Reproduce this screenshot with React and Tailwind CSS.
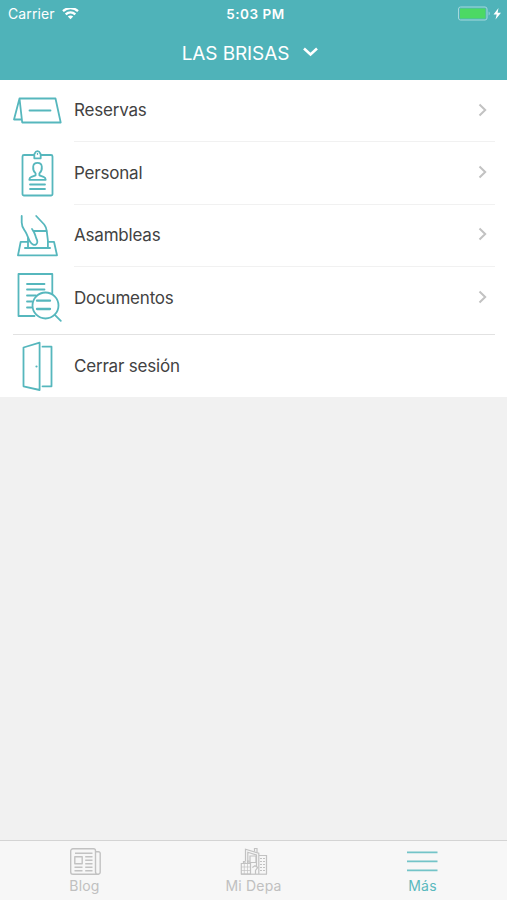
import React from "react";

const iconProps = {
  width: 50,
  height: 62,
  fill: "none",
  stroke: "#56b7bd",
  strokeWidth: 1.8,
  strokeLinejoin: "round",
  strokeLinecap: "round",
  className: "shrink-0",
};

const ReservasIcon = () => (
  <svg {...iconProps} viewBox="12 80 50 62">
    <path d="M19.5 98.5H55.5L60.7 122.5H22.2L19.5 98.5L14 119.5H21.5" />
    <path d="M29.5 110.5H50.5" />
  </svg>
);

const PersonalIcon = () => (
  <svg {...iconProps} viewBox="12 142 50 62">
    <path d="M34 155H24a1.5 1.5 0 0 0-1.5 1.5V194a1.5 1.5 0 0 0 1.5 1.5H51a1.5 1.5 0 0 0 1.5-1.5V156.5a1.5 1.5 0 0 0-1.5-1.5H41" />
    <path d="M34.3 158.3V154.3C34.3 153.7 34.9 153.5 35 153A2.6 2.6 0 0 1 40 153C40.1 153.5 40.7 153.7 40.7 154.3V158.3Z" />
    <path d="M37.5 153.5V154.3" strokeWidth="1.4" />
    <path d="M35.6 173.3C33.6 171.5 32.9 169 33.2 166.5C33.7 161.6 41.3 161.6 41.8 166.5C42.1 169 41.4 171.5 39.4 173.3V175.3L43.5 176.8C45 177.5 45.7 178.5 45.7 179.8H29.3C29.3 178.5 30 177.5 31.5 176.8L35.6 175.3Z" />
    <path d="M30 184.5H45M30 189H45" />
  </svg>
);

const AsambleasIcon = () => (
  <svg {...iconProps} viewBox="12 204.5 50 62">
    <path d="M21.7 215.5V222C21.7 226.5 23.2 228 25.3 231C27.5 234.3 28.3 238.5 30.3 241.6C32 244.2 34.4 245.2 36.2 243.8C38 242.3 37.4 240 36.4 238C35 235 35.2 232.3 32 228.5" />
    <path d="M36.2 215.5L44.2 224C46.2 226.5 46.3 228 46.8 231L47.9 240V247" />
    <path d="M33.5 230.5H46.5M28 237.5V247" />
    <path d="M27.5 241.3H20.7L18 254.8H57L54 241.3H48.5" />
    <path d="M25 247.6H50" strokeWidth="2" />
  </svg>
);

const DocumentosIcon = () => (
  <svg {...iconProps} viewBox="12 267 50 62">
    <path d="M34.5 316H18.5V274H52.3V293.5" />
    <path d="M27 284H44.5M27 289.5H44.5M27 295.5H36M27 301.5H32M27 307.5H31.5" />
    <circle cx="45.5" cy="305.5" r="13" />
    <path d="M37 300.7H50M37 309H50" strokeWidth="2.3" />
    <path d="M54.8 314.8L60.8 320.8" />
  </svg>
);

const CerrarIcon = () => (
  <svg {...iconProps} viewBox="12 335 50 62">
    <path d="M23.5 347.5L39.6 342.7V390L23.5 386.3Z" />
    <path d="M42.5 346.7H51.5V386.3H42.5" />
    <circle cx="36.5" cy="366.5" r="0.5" strokeWidth="1.2" />
  </svg>
);

const items = [
  { label: "Reservas", Icon: ReservasIcon },
  { label: "Personal", Icon: PersonalIcon },
  { label: "Asambleas", Icon: AsambleasIcon },
  { label: "Documentos", Icon: DocumentosIcon },
];

const StatusBar = () => (
  <div className="grid h-7 grid-cols-3 items-center leading-none text-white">
    <div className="flex items-center gap-[7px] pl-2 text-[14px] tracking-[0.1px]">
      <span className="pb-px">Carrier</span>
      <svg width="17" height="13" viewBox="0 0 17 13" fill="none" stroke="white" strokeWidth="2.3">
        <path d="M1 3.2C5.2 -0.8 11.8 -0.8 16 3.2" />
        <path d="M3.7 6.4C6.5 3.8 10.5 3.8 13.3 6.4" />
        <path d="M8.5 11.2L5.8 8.5C7.3 7.1 9.7 7.1 11.2 8.5Z" fill="white" stroke="none" />
      </svg>
    </div>
    <div className="pt-px pl-1 text-center text-[13.5px] font-semibold tracking-[0.5px]">5:03 PM</div>
    <div className="flex items-center justify-end pr-[5px]">
      <svg width="45" height="16" viewBox="457 5.5 45 16">
        <rect x="458.5" y="6.5" width="28.5" height="13" rx="2" fill="none" stroke="#a5d9dc" />
        <rect x="460" y="8" width="25.5" height="10" rx="0.5" fill="#4cd964" />
        <path d="M488.7 11V15C490 14.3 490 11.7 488.7 11Z" fill="#a5d9dc" />
        <path d="M498.5 7.5L493.5 14H496.7L495.5 19L501 12.3H497.6Z" fill="white" />
      </svg>
    </div>
  </div>
);

const BlogIcon = () => (
  <svg width="34" height="30" viewBox="68 846 34 30" fill="none" stroke="#c2c2c2" strokeWidth="1.4" strokeLinejoin="round">
    <path d="M73 848.8H93.5A2 2 0 0 1 95.5 850.8V872A2.5 2.5 0 0 0 98 874.3H73A2.3 2.3 0 0 1 70.7 872V851A2.2 2.2 0 0 1 73 848.8Z" />
    <path d="M95.5 851.8H98.5A1.7 1.7 0 0 1 100.2 853.5V872A2.2 2.2 0 0 1 98 874.3" />
    <rect x="74.8" y="856.7" width="7.4" height="7" />
    <path d="M75 853.2H92.5M85.2 856.7H92.5M85.2 860.3H92.5M85.2 863.8H92.5M74.5 867.2H82.5M85.2 867.2H92.5M74.5 870.7H82.5M85.2 870.7H92.5" />
  </svg>
);

const DepaIcon = () => (
  <svg width="34" height="30" viewBox="237 846 34 30" fill="none" stroke="#c2c2c2" strokeWidth="1.2">
    <path d="M245.5 861V849.2L258.8 853.3V874M247.8 861V852.2L256.5 855V867" />
    <path d="M250 856H256V862.5H250Z" />
    <path d="M254.5 851.5V848.5H257V852.5" />
    <path d="M241.3 863.5H250.5V874H241.3ZM243.5 863V861.5H245V863.5M247.5 863V861H249V863.5" />
    <path d="M244.3 863.5V874M247.5 863.5V874M241.3 867H250.5M241.3 870.5H250.5" strokeWidth="0.7" />
    <path d="M259 855.5H266.5V874" />
    <path d="M260 858.5H265M260 861.5H265M260 864.5H265M260 867.5H265M260 870.5H265" strokeDasharray="2 1" />
    <path d="M252.3 867.5L255 865.7L257.7 867.5L255.5 870.5V874" />
    <path d="M241 874.2H267" />
  </svg>
);

const MenuIcon = () => (
  <svg width="34" height="30" viewBox="406 846 34 30" fill="none" stroke="#73c4c8" strokeWidth="1.8">
    <path d="M407 852.4H437.5M407 861.4H437.5M407 870.4H437.5" />
  </svg>
);

const Tab = ({ label, children, active }) => (
  <button className={`flex flex-1 flex-col items-center pt-[5px] ${active ? "text-[#5ab9be]" : "text-[#c0c0c0]"}`}>
    {children}
    <span className="mt-[2px] text-[14px] leading-[16px] tracking-[0.2px]">{label}</span>
  </button>
);

const App = () => {
  return (
    <div className="flex h-[900px] w-[507px] flex-col overflow-hidden bg-[#f1f1f1] font-['Inter','Liberation_Sans',sans-serif] text-[#424242]">
      <header className="h-20 shrink-0 bg-[#4fb3b9]">
        <StatusBar />
        <div className="flex h-[50px] items-center justify-center gap-[13px] pr-[6px] text-white">
          <h1 className="pt-[2px] text-[19px] tracking-[-0.1px]">LAS BRISAS</h1>
          <svg width="17" height="12" viewBox="0 0 17 12" fill="none" stroke="white" strokeWidth="2.6" className="mb-[3px]">
            <path d="M2 2.5L8.5 8.5L15 2.5" />
          </svg>
        </div>
      </header>

      <main className="bg-white">
        <ul className="px-3">
          {items.map(({ label, Icon }, index) => (
            <li key={label} className="flex h-[62.3px]">
              <Icon />
              <div className={`ml-3 flex flex-1 items-center justify-between pr-2 ${index < items.length - 1 ? "border-b border-[#f1f1f1]" : ""}`}>
                <span className="pt-px text-[17px] tracking-[-0.2px]">{label}</span>
                <svg width="9" height="14" viewBox="0 0 9 14" fill="none" stroke="#c2c2c2" strokeWidth="2" className="mb-[2px]">
                  <path d="M1.5 1.5L7.2 7L1.5 12.5" />
                </svg>
              </div>
            </li>
          ))}
        </ul>
        <div className="mr-3 ml-[13px] mt-[5px] border-t border-[#e2e2e2]" />
        <div className="flex h-[62px] items-center px-3">
          <CerrarIcon />
          <span className="ml-3 pt-px text-[17px] tracking-[-0.2px]">Cerrar sesión</span>
        </div>
      </main>

      <nav className="mt-auto flex h-[60px] border-t border-[#d4d4d4] bg-[#f7f7f7]">
        <Tab label="Blog">
          <BlogIcon />
        </Tab>
        <Tab label="Mi Depa">
          <DepaIcon />
        </Tab>
        <Tab label="Más" active>
          <MenuIcon />
        </Tab>
      </nav>
    </div>
  );
};

export default App;
